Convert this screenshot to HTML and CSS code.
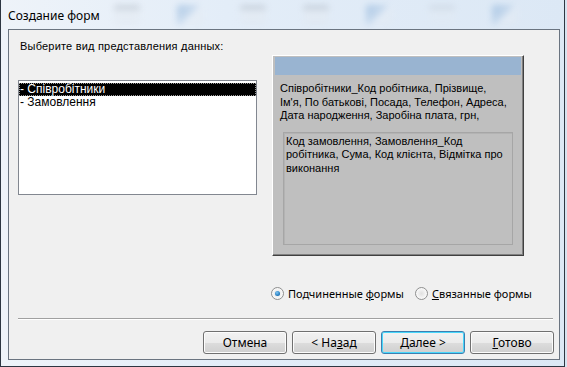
FILE: index.html
```html
<!DOCTYPE html>
<html lang="ru">
<head>
  <meta charset="UTF-8" />
  <title>Создание форм</title>
  <link rel="stylesheet" href="styles.css">
</head>
<body>

  <div class="window">
    <div class="titlebar">
      <span class="title">Создание форм</span>
      <div class="glass">
        <span class="blob"></span>
        <span class="blob blue"></span>
        <span class="blob"></span>
        <span class="blob"></span>
        <span class="blob blue"></span>
        <span class="blob pale"></span>
        <span class="blob blue"></span>
      </div>
    </div>

    <div class="client">
      <div class="prompt">Выберите вид представления данных:</div>

      <div class="data-row">
        <div class="list">
          <div class="item selected">- Співробітники</div>
          <div class="item">- Замовлення</div>
        </div>

        <div class="preview">
          <div class="preview-bar"></div>
          <div class="preview-text">Співробітники_Код робітника, Прізвище,<br>Ім'я, По батькові, Посада, Телефон, Адреса,<br>Дата народження, Заробіна плата, грн,</div>
          <div class="subform">Код замовлення, Замовлення_Код<br>робітника, Сума, Код клієнта, Відмітка про<br>виконання</div>
        </div>
      </div>

      <div class="radios">
        <label class="radio"><span class="dot checked"></span><span>Подчиненные <u>ф</u>ормы</span></label>
        <label class="radio"><span class="dot"></span><span><u>С</u>вязанные формы</span></label>
      </div>

      <div class="separator"></div>

      <div class="buttons">
        <button class="btn">Отмена</button>
        <button class="btn">&lt; На<u>з</u>ад</button>
        <button class="btn default"><u>Д</u>алее &gt;</button>
        <button class="btn"><u>Г</u>отово</button>
      </div>
    </div>
  </div>

</body>
</html>
```

FILE: styles.css
```css
body {
  margin: 0;
  padding: 0;
  background-color: #d6e3f0;
}

.window {
  width: 565px;
  height: 367px;
  box-sizing: border-box;
  border: 1px solid #2d3642;
  border-top: none;
  background: linear-gradient(90deg, #eef3f9 0%, #e3edf8 40%, #dce8f5 100%);
}

.titlebar {
  height: 29px;
  display: flex;
  align-items: center;
  padding-left: 7px;
  overflow: hidden;
}

.title {
  font-family: "Noto Sans", sans-serif;
  font-size: 12px;
  color: #000;
  padding-top: 2px;
}

.glass {
  display: flex;
  gap: 37px;
  margin-left: 14px;
}

.blob {
  width: 26px;
  height: 20px;
  border-radius: 3px;
  background: linear-gradient(#a9b2bd 0%, #a9b2bd 25%, #e7edf3 25%, #dfe6ee 100%);
  filter: blur(3px);
  opacity: 0.45;
}

.blob.blue {
  background: linear-gradient(135deg, #6f9fd0 0%, #a8c4e2 45%, #e9eff6 55%, #e0e7ef 100%);
}

.blob.pale {
  opacity: 0.25;
}

.client {
  margin: 0 4px 0 7px;
  height: 331px;
  box-sizing: border-box;
  border: 1px solid #6a7480;
  background-color: #f0f0f0;
  font-family: "Liberation Sans", Arial, sans-serif;
  font-size: 11px;
  color: #000;
}

.prompt {
  margin: 9px 0 0 11px;
  line-height: 14px;
  letter-spacing: 0.2px;
}

.data-row {
  display: flex;
  align-items: flex-start;
  gap: 15px;
  margin: 2px 0 0 9px;
  height: 201px;
}

.list {
  margin-top: 25px;
  width: 239px;
  height: 115px;
  box-sizing: border-box;
  border: 1px solid #828790;
  background-color: #fff;
  padding: 2px 0;
  font-size: 12px;
}

.item {
  height: 13px;
  line-height: 13px;
  padding-left: 1px;
}

.item.selected {
  background-color: #000;
  color: #fff;
  outline: 1px dotted #9a9a9a;
  outline-offset: -1px;
}

.preview {
  width: 252px;
  height: 201px;
  box-sizing: border-box;
  border: 1px solid;
  border-color: #ffffff #404040 #404040 #ffffff;
  box-shadow: inset -1px -1px #808080;
  background-color: #bfbfbf;
  padding: 1px;
}

.preview-bar {
  height: 18px;
  margin: 0 1px;
  background-color: #99b4d1;
}

.preview-text {
  margin: 7px 0 0 6px;
  line-height: 13.5px;
  white-space: nowrap;
}

.subform {
  margin: 9px 0 0 9px;
  width: 230px;
  height: 113px;
  box-sizing: border-box;
  border: 1px solid #a6a6a6;
  box-shadow: inset 1px 1px #b3b3b3;
  padding: 2px 0 0 2px;
  line-height: 13.5px;
  white-space: nowrap;
}

.radios {
  display: flex;
  gap: 11px;
  margin: 31px 0 0 262px;
  height: 13px;
  font-family: "Noto Sans", sans-serif;
  font-size: 11px;
}

.radio {
  display: flex;
  align-items: center;
  gap: 4px;
  line-height: 13px;
  white-space: nowrap;
}

.dot {
  width: 11px;
  height: 11px;
  border-radius: 50%;
  border: 1px solid #8e8f8f;
  background: radial-gradient(circle, #e0e0e0 0%, #f6f6f6 60%, #ffffff 100%);
  display: flex;
  align-items: center;
  justify-content: center;
}

.dot.checked::after {
  content: "";
  width: 5px;
  height: 5px;
  border-radius: 50%;
  background: radial-gradient(circle at 40% 35%, #7fc6f5 0%, #1a73b8 70%, #0d4f8a 100%);
}

.separator {
  margin: 18px 6px 0 9px;
  height: 1px;
  background-color: #a0a0a0;
  border-bottom: 1px solid #ffffff;
}

.buttons {
  display: flex;
  justify-content: flex-end;
  gap: 5px;
  margin: 11px 5px 0 0;
}

.btn {
  width: 84px;
  height: 23px;
  padding: 0;
  font-family: "Noto Sans", sans-serif;
  font-size: 12px;
  color: #000;
  border: 1px solid #707070;
  border-radius: 3px;
  background: linear-gradient(#f2f2f2 0%, #ebebeb 50%, #dddddd 50%, #cfcfcf 100%);
  box-shadow: inset 0 0 0 1px #fcfcfc;
}

.btn.default {
  border-color: #3c7fb1;
  box-shadow: inset 0 0 0 1px #48d7fb;
}
```
